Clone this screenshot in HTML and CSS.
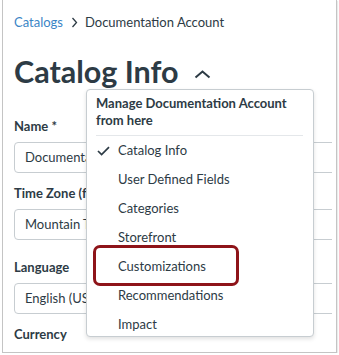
FILE: index.html
```html
<!DOCTYPE html>
<html lang="en">
<head>
  <meta charset="UTF-8" />
  <title>Catalog Info</title>
  <link rel="stylesheet" href="styles.css">
</head>
<body>

  <div class="frame">
    <div class="content">
      <div class="crumbs">
        <a href="#" class="crumb-link">Catalogs</a>
        <svg class="crumb-sep" width="7" height="11" viewBox="0 0 7 11"><path d="M1.5 1 L5.5 5.5 L1.5 10" fill="none" stroke="#2d3b45" stroke-width="1.3"/></svg>
        <span>Documentation Account</span>
      </div>

      <h1 class="page-title">Catalog Info
        <svg class="title-chevron" width="17" height="9" viewBox="0 0 17 9"><path d="M1.5 7.5 L8.5 1.5 L15.5 7.5" fill="none" stroke="#2d3b45" stroke-width="2"/></svg>
      </h1>

      <div class="field field-first">
        <label class="field-label">Name *</label>
        <div class="field-input">Documentation Account</div>
      </div>
      <div class="field field-tz">
        <label class="field-label">Time Zone (for reports)</label>
        <div class="field-input">Mountain Time (US &amp; Canada)</div>
      </div>
      <div class="field">
        <label class="field-label">Language</label>
        <div class="field-input">English (US)</div>
      </div>
      <div class="field">
        <label class="field-label">Currency</label>
      </div>
    </div>

    <div class="menu">
      <div class="menu-head">Manage Documentation Account from here</div>
      <div class="menu-sep"></div>
      <ul class="menu-list">
        <li class="menu-item">
          <svg class="check" width="13" height="10" viewBox="0 0 13 10"><path d="M1 5 L4.6 8.6 L12 1.2" fill="none" stroke="#2d3b45" stroke-width="1.7"/></svg>
          Catalog Info
        </li>
        <li class="menu-item">User Defined Fields</li>
        <li class="menu-item">Categories</li>
        <li class="menu-item">Storefront</li>
        <li class="menu-item">Customizations</li>
        <li class="menu-item">Recommendations</li>
        <li class="menu-item">Impact</li>
      </ul>
      <div class="callout"></div>
    </div>
  </div>

</body>
</html>
```

FILE: styles.css
```css
body {
  margin: 0;
  background: #fff;
  font-family: 'Lato', 'Liberation Sans', sans-serif;
  color: #2d3b45;
}
.frame {
  position: relative;
  margin-left: 2px;
  width: 333px;
  height: 352px;
  border: 1px solid #c4c4c4;
  border-top: none;
  box-shadow: 1px 1px 1px rgba(0, 0, 0, 0.08);
  overflow: hidden;
}
.content {
  padding: 12px 0 0 11px;
  margin-right: 4px;
  overflow: hidden;
}
.crumbs {
  display: flex;
  align-items: center;
  font-size: 13px;
  line-height: 20px;
}
.crumb-link {
  color: #3a85c6;
  text-decoration: none;
}
.crumb-sep {
  margin: 0 7px 0 8px;
}
.page-title {
  display: flex;
  align-items: center;
  margin: 21px 0 0 0;
  font-size: 30.5px;
  line-height: 36px;
  font-weight: 700;
}
.title-chevron {
  margin: 7px 0 0 15px;
}
.field {
  margin-top: 10px;
}
.field-first {
  margin-top: 27px;
}
.field-tz {
  margin-bottom: 17px;
}
.field-label {
  display: block;
  font-size: 13px;
  line-height: 20px;
  font-weight: 700;
}
.field-input {
  width: 340px;
  height: 29px;
  margin-top: 6px;
  padding-left: 10px;
  border: 1px solid #c7cdd1;
  border-radius: 4px;
  font-size: 13px;
  line-height: 29px;
  white-space: nowrap;
}
.menu {
  position: absolute;
  left: 83px;
  top: 89px;
  width: 226px;
  height: 246px;
  background: #fff;
  border: 1px solid #c7cdd1;
  border-radius: 4px;
  box-shadow: 0 2px 4px rgba(0, 0, 0, 0.12);
}
.menu-head {
  padding: 5px 10px 0 9px;
  font-size: 13px;
  line-height: 17px;
  font-weight: 700;
}
.menu-sep {
  margin: 6px 10px 0 9px;
  border-top: 1px solid #e4e7ea;
}
.menu-list {
  list-style: none;
  margin: 0;
  padding: 0;
}
.menu-item {
  position: relative;
  height: 29px;
  line-height: 29px;
  padding-left: 31px;
  font-size: 13px;
}
.check {
  position: absolute;
  left: 10px;
  top: 10px;
}
.callout {
  position: absolute;
  left: 6px;
  top: 155px;
  width: 140px;
  height: 35px;
  border: 3px solid #8e1419;
  border-radius: 7px;
}
```
